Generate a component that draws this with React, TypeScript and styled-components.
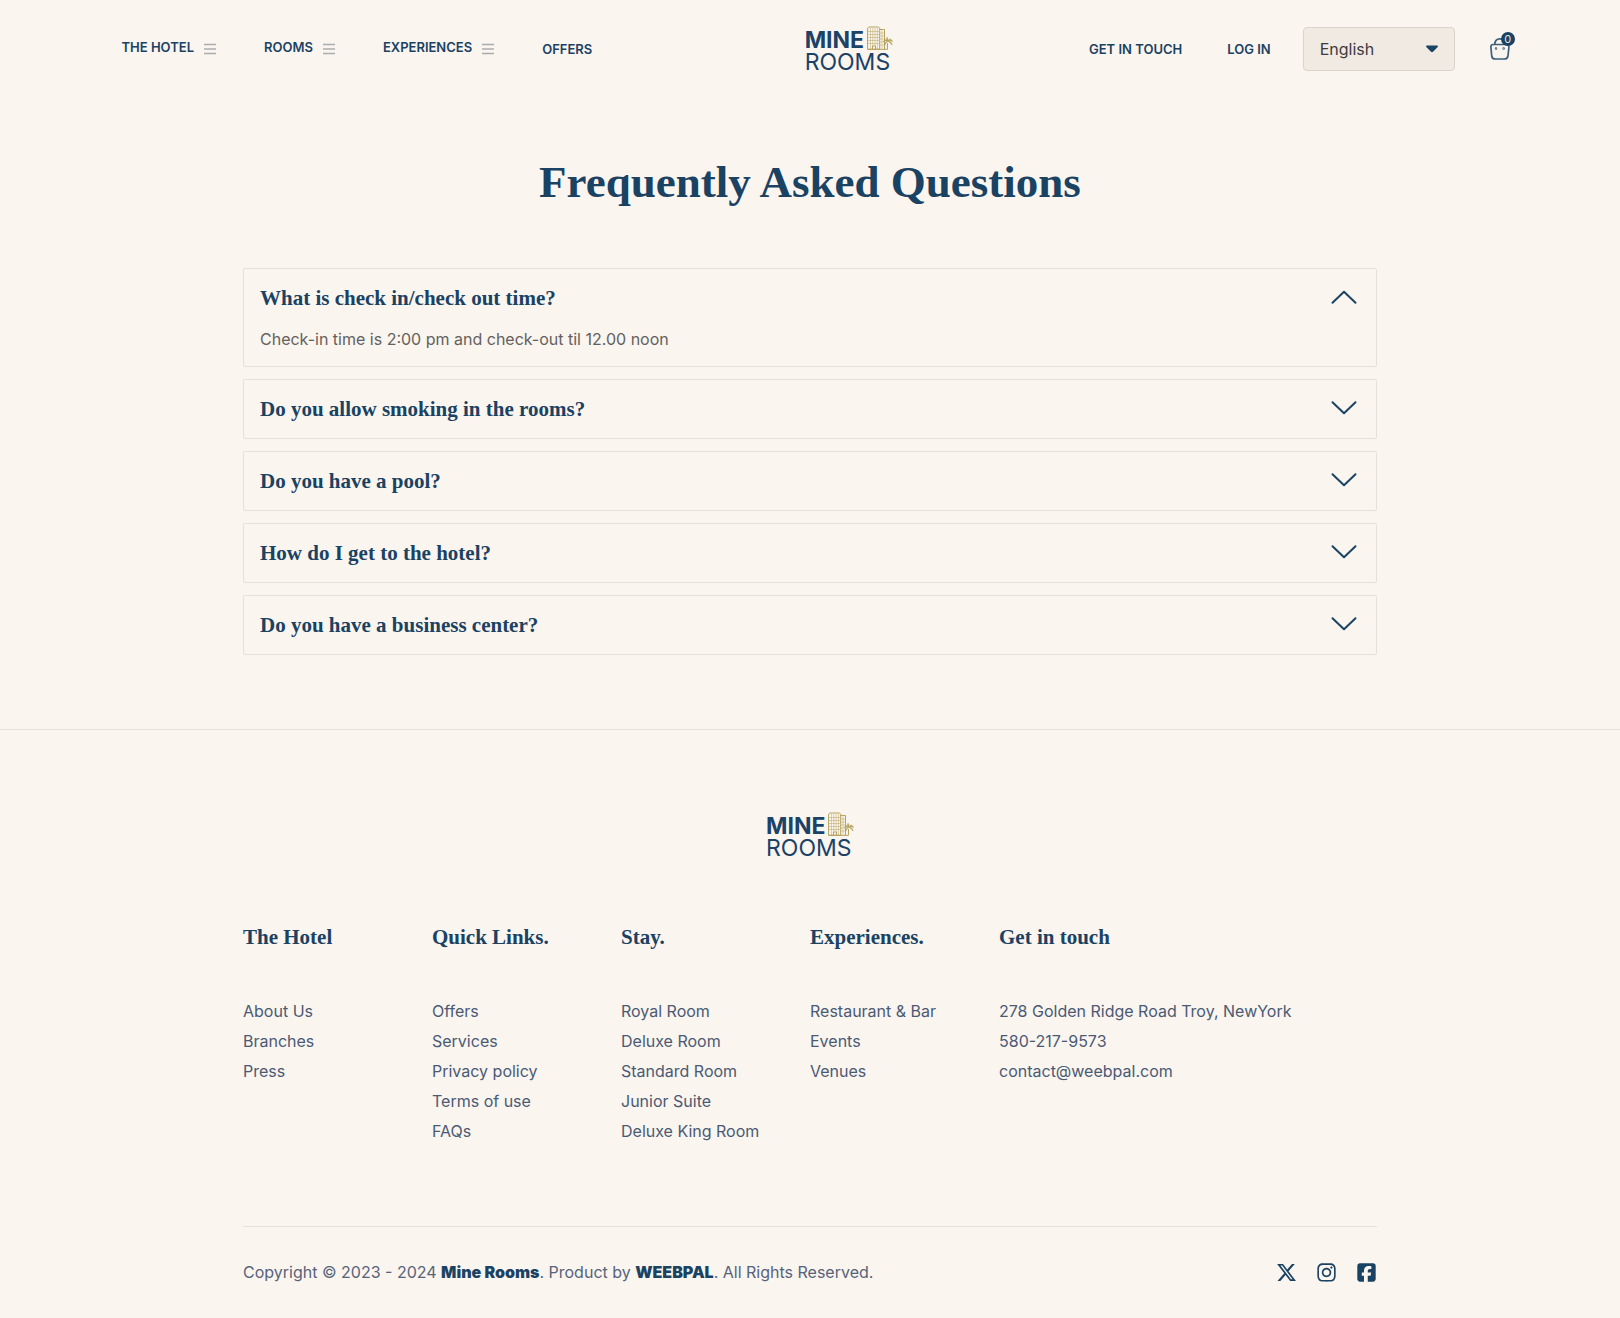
import React, { useState } from "react";
import styled, { createGlobalStyle } from "styled-components";
import { FaXTwitter, FaInstagram, FaSquareFacebook } from "react-icons/fa6";

const navy = "#1a4263";
const gold = "#b5a25c";
const line = "#e6e0d9";
const serif = `"Liberation Serif", serif`;

const GlobalStyle = createGlobalStyle`
  * { box-sizing: border-box; }
  body {
    margin: 0;
    background: #faf5ee;
    color: ${navy};
    font-family: Inter, sans-serif;
    font-size: 16px;
    line-height: 24px;
  }
  a { color: inherit; text-decoration: none; }
  button { font: inherit; color: inherit; background: none; border: 0; padding: 0; cursor: pointer; }
  ul { list-style: none; margin: 0; padding: 0; }
`;

const Header = styled.header`
  display: flex;
  align-items: center;
  justify-content: space-between;
  padding: 25px 6.5% 26px 7.5%;
`;

const PrimaryNav = styled.nav`
  display: flex;
  align-items: center;
  gap: 48px;
  padding-right: 16px;
`;

const navText = `
  font-size: 13px;
  font-weight: 600;
  line-height: 20px;
  text-transform: uppercase;
  white-space: nowrap;
`;

const NavLink = styled.a`
  ${navText}
`;

const MenuButton = styled.button`
  display: flex;
  align-items: center;
  gap: 10px;
`;

const MenuLabel = styled.span`
  ${navText}
  padding-bottom: 4px;
`;

const MenuBars = styled.svg`
  width: 12px;
  height: 12px;
  stroke: #a9adb1;
  stroke-width: 1.3;
`;

const Actions = styled.div`
  display: flex;
  align-items: center;
`;

const AccountNav = styled.nav`
  display: flex;
  gap: 45px;
  margin-right: 32px;
`;

const SelectWrap = styled.div`
  position: relative;
  width: 152px;
  margin-right: 35px;
`;

const LanguageSelect = styled.select`
  display: block;
  appearance: none;
  width: 100%;
  height: 44px;
  padding: 0 16px;
  border: 1px solid #dbd4cd;
  border-radius: 4px;
  background: #f1eae2;
  color: #3c3c3f;
  font: inherit;
`;

const Caret = styled.svg`
  position: absolute;
  right: 17px;
  top: 18px;
  width: 12px;
  height: 8px;
  fill: ${navy};
  pointer-events: none;
`;

const BagButton = styled.button`
  position: relative;
  width: 25px;
  height: 34px;
`;

const BagIcon = styled.svg`
  display: block;
  width: 24px;
  height: 34px;
`;

const BagCount = styled.span`
  position: absolute;
  top: 0;
  right: 0;
  width: 14px;
  height: 14px;
  border-radius: 50%;
  background: ${navy};
  color: #e8e3de;
  font-size: 11px;
  line-height: 14px;
  text-align: center;
`;

const LogoLink = styled.a`
  display: block;
  width: 88px;
  color: #1b4267;
  font-size: 23px;
  line-height: 22px;
`;

const LogoTop = styled.span`
  display: flex;
  align-items: flex-end;
  justify-content: space-between;
  height: 26px;
  font-weight: 700;
`;

const LogoBottom = styled.span`
  display: block;
  font-weight: 400;
`;

const LogoArt = styled.svg`
  width: 26px;
  height: 25px;
  fill: none;
  stroke: ${gold};
`;

const Main = styled.main`
  width: 70%;
  margin: 0 auto;
  padding: 55px 0 74px;
`;

const Title = styled.h1`
  margin: 0 0 58px;
  font-family: ${serif};
  font-size: 45px;
  font-weight: 700;
  line-height: 56px;
  text-align: center;
`;

const Faqs = styled.div`
  display: grid;
  gap: 12px;
`;

const FaqItem = styled.section`
  border: 1px solid ${line};
  border-radius: 2px;
`;

const FaqHeading = styled.h2`
  margin: 0;
  font-family: ${serif};
  font-size: 21px;
  font-weight: 700;
`;

const FaqToggle = styled.button`
  display: flex;
  align-items: center;
  justify-content: space-between;
  width: 100%;
  height: 58px;
  padding: 0 19px 0 16px;
  text-align: left;
`;

const Chevron = styled.svg<{ $open: boolean }>`
  width: 26px;
  height: 16px;
  margin-bottom: 3px;
  fill: none;
  stroke: ${navy};
  stroke-width: 2;
  stroke-linecap: round;
  stroke-linejoin: round;
  transform: ${(p) => (p.$open ? "rotate(180deg)" : "none")};
`;

const Answer = styled.p`
  margin: 0;
  padding: 0 16px 15px;
  color: #63615f;
`;

const Footer = styled.footer`
  border-top: 1px solid ${line};
  padding-top: 81px;
`;

const FooterInner = styled.div`
  width: 70%;
  margin: 0 auto;
`;

const FooterLogo = styled.div`
  display: flex;
  justify-content: center;
  margin-bottom: 64px;
`;

const Columns = styled.div`
  display: grid;
  grid-template-columns: repeat(6, 1fr);
  padding-bottom: 80px;
`;

const Column = styled.section<{ $wide?: boolean }>`
  grid-column: span ${(p) => (p.$wide ? 2 : 1)};
`;

const ColumnTitle = styled.h3`
  margin: 0 0 45px;
  font-family: ${serif};
  font-size: 21px;
  font-weight: 700;
  line-height: 28px;
`;

const ColumnLink = styled.li`
  color: #4a5a75;
  line-height: 30px;
  white-space: nowrap;
`;

const Bottom = styled.div`
  display: flex;
  align-items: center;
  justify-content: space-between;
  border-top: 1px solid ${line};
  padding: 33px 0 34px;
`;

const Copyright = styled.p`
  margin: 0;
  color: #56637b;

  a {
    color: ${navy};
    font-weight: 900;
  }
`;

const Socials = styled.div`
  display: flex;
  align-items: center;
  gap: 19px;
  font-size: 21px;

  a { display: flex; }
`;

function Logo() {
  return (
    <LogoLink href="#" aria-label="Mine Rooms">
      <LogoTop>
        MINE
        <LogoArt viewBox="0 0 26 25" aria-hidden="true">
          <path d="M.6 23.3V2.2L2 1h9.500l1.200 1.200V23.300zM12.700 3.500h4.800v19.800M.6 23.300h19.900V17" strokeWidth="1" />
          <path
            d="M3.500 2v21M5.800 2v18M8.100 2v18M10.400 2v21M15 4.500v18M1 5.500h11M1 8.500h11M1 11.500h11M1 14.500h11M1 17.500h11M13 7h4M13 10h4M13 13h4M13 16h4M13 19h4"
            strokeWidth=".6"
            opacity=".8"
          />
          <path d="M5.500 23v-3h3v3" strokeWidth="1" />
          <path
            d="M20.700 15.200c-1.900-2.200-3.400-1.800-4.200.4 1.500-.7 2.700-.6 4.200-.4zM20.700 15.200c1.400-2.900 3.700-2.600 4.800.2-1.600-.8-3-.7-4.800-.2zM20.700 15.200c2.900.1 4.300 1.500 4.300 3.900-1.100-2-2.500-2.900-4.300-3.900zM20.700 15.200c-2.100.5-3.100 1.900-2.900 3.900.9-1.900 1.800-2.800 2.900-3.900zM20.500 15c-1.200-1.500-1.100-2.700-.4-3.700.9 1.200 1.100 2.300.4 3.700z"
            fill={gold}
            strokeWidth=".6"
          />
        </LogoArt>
      </LogoTop>
      <LogoBottom>ROOMS</LogoBottom>
    </LogoLink>
  );
}

const faqs = [
  { q: "What is check in/check out time?", a: "Check-in time is 2:00 pm and check-out til 12.00 noon" },
  { q: "Do you allow smoking in the rooms?" },
  { q: "Do you have a pool?" },
  { q: "How do I get to the hotel?" },
  { q: "Do you have a business center?" },
];

const columns = [
  { title: "The Hotel", links: ["About Us", "Branches", "Press"] },
  { title: "Quick Links.", links: ["Offers", "Services", "Privacy policy", "Terms of use", "FAQs"] },
  { title: "Stay.", links: ["Royal Room", "Deluxe Room", "Standard Room", "Junior Suite", "Deluxe King Room"] },
  { title: "Experiences.", links: ["Restaurant & Bar", "Events", "Venues"] },
  {
    title: "Get in touch",
    wide: true,
    links: ["278 Golden Ridge Road Troy, NewYork", "580-217-9573", "contact@weebpal.com"],
  },
];

export default function App() {
  const [open, setOpen] = useState(0);

  return (
    <>
      <GlobalStyle />
      <Header>
        <PrimaryNav aria-label="Main">
          {["The Hotel", "Rooms", "Experiences"].map((label) => (
            <MenuButton key={label} type="button">
              <MenuLabel>{label}</MenuLabel>
              <MenuBars viewBox="0 0 12 12" aria-hidden="true">
                <path d="M0 1.500h12M0 6h12M0 10.500h12" />
              </MenuBars>
            </MenuButton>
          ))}
          <NavLink href="#">Offers</NavLink>
        </PrimaryNav>
        <Logo />
        <Actions>
          <AccountNav aria-label="Account">
            <NavLink href="#">Get in touch</NavLink>
            <NavLink href="#">Log in</NavLink>
          </AccountNav>
          <SelectWrap>
            <LanguageSelect aria-label="Language" defaultValue="English">
              <option>English</option>
            </LanguageSelect>
            <Caret viewBox="0 0 12 8" aria-hidden="true">
              <path d="M1 .5h10c.9 0 1.200.9.700 1.500L7 6.700c-.6.600-1.400.600-2 0L.3 2C-.2 1.400.1.500 1 .5z" />
            </Caret>
          </SelectWrap>
          <BagButton type="button" aria-label="Cart">
            <BagIcon viewBox="0 0 24 34" fill="none" stroke="#3f5f7b" strokeWidth="1.700" aria-hidden="true">
              <path d="M3 12.500h13.500c1.600 0 2.600 1.200 2.400 2.700l-.9 8.600c-.3 2-1.600 3.200-3.600 3.200H5.300c-2 0-3.400-1.200-3.600-3.200L.9 15.200c-.2-1.500.6-2.700 2.100-2.700z" />
              <path d="M4.800 12.500c0-3.300 1.900-5.700 5-5.700s5 2.400 5 5.700" />
              <circle cx="6" cy="16.500" r=".4" />
              <circle cx="13.600" cy="16.500" r=".4" />
            </BagIcon>
            <BagCount>0</BagCount>
          </BagButton>
        </Actions>
      </Header>

      <Main>
        <Title>Frequently Asked Questions</Title>
        <Faqs>
          {faqs.map((item, i) => (
            <FaqItem key={item.q}>
              <FaqHeading>
                <FaqToggle type="button" aria-expanded={open === i} onClick={() => setOpen(open === i ? -1 : i)}>
                  {item.q}
                  <Chevron $open={open === i} viewBox="0 0 26 16" aria-hidden="true">
                    <path d="M1.500 2.200 13 13.300 24.500 2.200" />
                  </Chevron>
                </FaqToggle>
              </FaqHeading>
              {open === i && item.a && <Answer>{item.a}</Answer>}
            </FaqItem>
          ))}
        </Faqs>
      </Main>

      <Footer>
        <FooterInner>
          <FooterLogo>
            <Logo />
          </FooterLogo>
          <Columns>
            {columns.map((col) => (
              <Column key={col.title} $wide={col.wide}>
                <ColumnTitle>{col.title}</ColumnTitle>
                <ul>
                  {col.links.map((label) => (
                    <ColumnLink key={label}>
                      <a href="#">{label}</a>
                    </ColumnLink>
                  ))}
                </ul>
              </Column>
            ))}
          </Columns>
          <Bottom>
            <Copyright>
              Copyright © 2023 - 2024 <a href="#">Mine Rooms</a>. Product by <a href="#">WEEBPAL</a>. All Rights
              Reserved.
            </Copyright>
            <Socials>
              <a href="#" aria-label="X">
                <FaXTwitter />
              </a>
              <a href="#" aria-label="Instagram">
                <FaInstagram />
              </a>
              <a href="#" aria-label="Facebook">
                <FaSquareFacebook />
              </a>
            </Socials>
          </Bottom>
        </FooterInner>
      </Footer>
    </>
  );
}
